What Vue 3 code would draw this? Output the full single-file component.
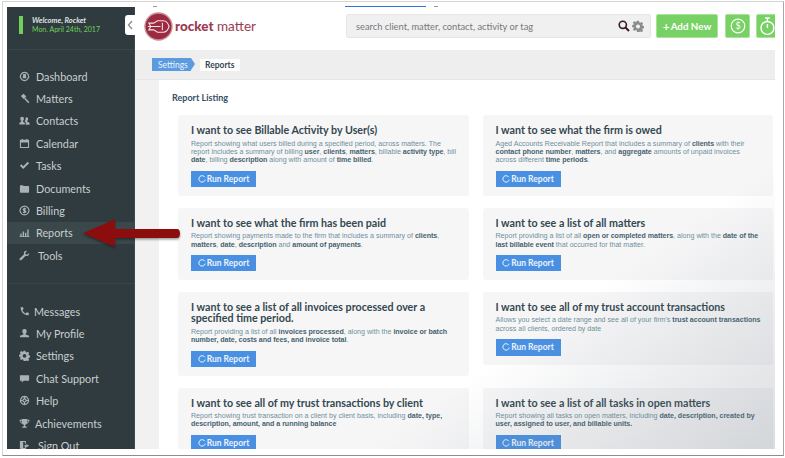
<script setup>
const navTop = [
  { label: 'Dashboard', icon: 'gauge' },
  { label: 'Matters', icon: 'gavel' },
  { label: 'Contacts', icon: 'users' },
  { label: 'Calendar', icon: 'calendar' },
  { label: 'Tasks', icon: 'check' },
  { label: 'Documents', icon: 'folder' },
  { label: 'Billing', icon: 'dollar' },
  { label: 'Reports', icon: 'chart', active: true },
  { label: 'Tools', icon: 'wrench', shift: 2 }
]
const navBottom = [
  { label: 'Messages', icon: 'phone', shift: -2 },
  { label: 'My Profile', icon: 'user' },
  { label: 'Settings', icon: 'gear' },
  { label: 'Chat Support', icon: 'chat' },
  { label: 'Help', icon: 'help' },
  { label: 'Achievements', icon: 'trophy', shift: -1 },
  { label: 'Sign Out', icon: 'signout', shift: 2 }
]

// fill = solid shapes, line = stroked shapes, 12x12 box
const icons = {
  gauge: { line: 'M6 1.500a4.500 4.500 0 1 0 .01 0z', fill: 'M4.600 3.400h2.800l.6 4.600H4z' },
  gavel: { fill: 'M2 3.400 5 .8l3 3-3 2.700zM5.600 6.200l1.200-1.100 4.600 4.900-1.300 1.200z' },
  users: { fill: 'M3.400 2a2 2 0 0 1 2 2.200c0 1-.5 1.800-1 2.200v1l2 1v2H.4v-2l2-1v-1c-.5-.4-1-1.200-1-2.200a2 2 0 0 1 2-2.200zM8.200 2.400a1.800 1.800 0 0 1 1.800 2c0 .9-.4 1.600-.9 2v.9l2.400 1.100v2.100H7.400V8l-1-.6v-1c.6-.6.7-1.200.7-2.100 0-.7.2-1.900 1.100-1.900z' },
  calendar: { fill: 'M1 2h2V1h1.400v1h3.200V1H9v1h2v9H1zm1.200 3v4.800h7.600V5z' },
  check: { fill: 'M1 6.200 2.600 4.700l2 2L9.500 2 11 3.500 4.600 9.800z' },
  folder: { fill: 'M1 3.200c0-.5.3-.8.8-.8h2.400l.8 1h5.200c.5 0 .8.3.8.8v5.600c0 .5-.3.8-.8.8H1.800c-.5 0-.8-.3-.8-.8z' },
  dollar: { line: 'M6 1.200a4.800 4.800 0 1 0 .01 0zM7.600 4.600C7.200 3.800 4.600 3.600 4.600 5c0 1.400 3 .8 3 2.200 0 1.300-2.600 1.100-3.100.3M6 3v6' },
  chart: { fill: 'M.6 10h10.800v.9H.6zM1.400 7h1.500v3H1.400zM4 5h1.500v5H4zM6.500 6.400H8V10H6.500zM9 2.600h1.500V10H9z' },
  wrench: { fill: 'M11 3.200 9 5.100 7.300 4.700 6.900 3 8.800 1.100C7.200.5 5.400 1.600 5.300 3.300c0 .5.1.9.2 1.300L1 9c-.6.6-.6 1.400-.1 1.900s1.300.5 1.900-.1l4.500-4.400c1.900.7 4.500-.6 3.700-3.200z' },
  phone: { fill: 'M2.400 1.300 4.300 1 5 3.500 3.800 4.300c.4 1.600 1.900 3.200 3.700 3.800l.8-1.200 2.600.8-.4 2c-.1.4-.5.6-.9.5C5 9.700 1.900 6.500 1.800 2c0-.3.2-.6.6-.7z' },
  user: { fill: 'M6 1a2.300 2.300 0 0 1 2.400 2.500c0 1.100-.5 2-1.100 2.500v1l3.700 1.400V10H1V8.400l3.700-1.400V6c-.6-.5-1.100-1.400-1.100-2.500A2.300 2.300 0 0 1 6 1z' },
  gear: { fill: 'M5 .8h2l.3 1.500 1.100.5 1.300-.8 1.400 1.400-.8 1.300.5 1.100 1.500.3v2l-1.500.3-.5 1.100.8 1.300-1.400 1.400-1.300-.8-1.100.5L7 12H5l-.3-1.400-1.100-.5-1.300.8-1.400-1.400.8-1.300-.5-1.100L0 7.300v-2l1.200-.3.5-1.100-.8-1.300 1.400-1.400 1.300.8 1.100-.5zM6 4.400a2 2 0 1 0 .01 0z' },
  chat: { fill: 'M1 2.400h10v6H5.200L3 10.400V8.400H1z' },
  help: { line: 'M6 1.600a4.400 4.400 0 1 0 .01 0zM6 4.200a1.800 1.800 0 1 0 .01 0zM6 1.600v2.600M6 7.800v2.600M1.600 6h2.600M7.800 6h2.600' },
  trophy: { fill: 'M3 1h6v1h2.400c0 2.400-1 3.800-3 4.200-.4.6-1 1-1.700 1.200v1.600c1 0 1.800.5 1.800 1.500H3.500c0-1 .8-1.500 1.800-1.500V7.400C4.600 7.200 4 6.800 3.600 6.200 1.600 5.800.6 4.400.6 2H3zM1.600 3c.1 1 .6 1.800 1.500 2.200L3 3zm8.800 0H9l-.1 2.200c.9-.4 1.400-1.200 1.500-2.200z' },
  signout: { fill: 'M1 1h6.500v3H6.400V2.200H3.800l.8.5v6h1.800V7h1.100v3H4.600v1.200L1 9.200zM8 4.300l3 2-3 2V7H6V5.500h2z' }
}

const leftReports = [
  { title: 'I want to see Billable Activity by User(s)', desc: 'Report showing what users billed during a specified period, across matters. The report includes a summary of billing <b>user</b>, <b>clients</b>, <b>matters</b>, billable <b>activity type</b>, bill <b>date</b>, billing <b>description</b> along with amount of <b>time billed</b>.' },
  { title: 'I want to see what the firm has been paid', desc: 'Report showing payments made to the firm that includes a summary of <b>clients</b>, <b>matters</b>, <b>date</b>, <b>description</b> and <b>amount of payments</b>.' },
  { title: 'I want to see a list of all invoices processed over a specified time period.', desc: 'Report providing a list of all <b>invoices processed</b>, along with the <b>invoice or batch number, date, costs and fees, and invoice total</b>.' },
  { title: 'I want to see all of my trust transactions by client', desc: 'Report showing trust transaction on a client by client basis, including <b>date, type, description, amount, and a running balance</b>' }
]
const rightReports = [
  { title: 'I want to see what the firm is owed', desc: 'Aged Accounts Receivable Report that includes a summary of <b>clients</b> with their <b>contact phone number</b>, <b>matters</b>, and <b>aggregate</b> amounts of unpaid invoices<br>across different <b>time periods</b>.' },
  { title: 'I want to see a list of all matters', desc: 'Report providing a list of all <b>open or completed matters</b>, along with the <b>date of the last billable event</b> that occurred for that matter.' },
  { title: 'I want to see all of my trust account transactions', desc: 'Allows you select a date range and see all of your firm\'s <b>trust account transactions</b> across all clients, ordered by date' },
  { title: 'I want to see a list of all tasks in open matters', desc: 'Report showing all tasks on open matters, including <b>date, description, created by user, assigned to user, and billable units.</b>' }
]
const reports = leftReports.flatMap((r, i) => [r, rightReports[i]])
</script>

<template>
  <div class="frame">
    <span class="top-line"></span>
    <span class="top-mark mark-a"></span>
    <span class="top-mark mark-b"></span>
    <div class="window">
      <aside class="sidebar">
        <div class="welcome">
          <span class="welcome-bar"></span>
          <div>
            <div class="welcome-name">Welcome, Rocket</div>
            <div class="welcome-date">Mon. April 24th, 2017</div>
          </div>
        </div>
        <button class="collapse" aria-label="Collapse">
          <svg width="6" height="10" viewBox="0 0 6 10"><path d="M5 1 1.500 5 5 9" fill="none" stroke="#8b9396" stroke-width="1.400" /></svg>
        </button>

        <nav class="nav nav-top">
          <a v-for="item in navTop" :key="item.label" class="nav-item" :class="{ active: item.active }">
            <svg class="nav-icon" width="12" height="12" viewBox="0 0 12 12">
              <path v-if="icons[item.icon].fill" :d="icons[item.icon].fill" fill="currentColor" fill-rule="evenodd" />
              <path v-if="icons[item.icon].line" :d="icons[item.icon].line" fill="none" stroke="currentColor" stroke-width="1.300" />
            </svg>
            <span :style="{ marginLeft: (item.shift || 0) + 'px' }">{{ item.label }}</span>
          </a>
        </nav>
        <nav class="nav nav-bottom">
          <a v-for="item in navBottom" :key="item.label" class="nav-item">
            <svg class="nav-icon" width="12" height="12" viewBox="0 0 12 12">
              <path v-if="icons[item.icon].fill" :d="icons[item.icon].fill" fill="currentColor" fill-rule="evenodd" />
              <path v-if="icons[item.icon].line" :d="icons[item.icon].line" fill="none" stroke="currentColor" stroke-width="1.300" />
            </svg>
            <span :style="{ marginLeft: (item.shift || 0) + 'px' }">{{ item.label }}</span>
          </a>
        </nav>
      </aside>

      <main class="main">
        <header class="topbar">
          <div class="logo">
            <svg width="29" height="29" viewBox="0 0 30 30">
              <circle cx="15" cy="15" r="14" fill="#9c2a40" stroke="#c98f9b" stroke-width="1.400" />
              <path d="M5 11.500h5l4-2.500h6c2.500 0 5 3 6 6-1 3-3.500 6-6 6h-6l-4-2.500H5l2-3.500z" fill="none" stroke="#f3e3e6" stroke-width="1.100" />
              <path d="M4 15h13M19 11v8" fill="none" stroke="#f3e3e6" stroke-width="1.100" />
            </svg>
            <span class="logo-text"><b>rocket</b> matter</span>
          </div>
          <div class="search">
            <span class="search-text">search client, matter, contact, activity or tag</span>
            <svg class="search-icon" width="12" height="12" viewBox="0 0 12 12">
              <circle cx="4.800" cy="4.800" r="3.600" fill="none" stroke="#3a1a28" stroke-width="1.600" />
              <path d="M7.500 7.500 11 11" stroke="#3a1a28" stroke-width="2" />
            </svg>
            <svg class="search-gear" width="12" height="12" viewBox="0 0 12 12">
              <path :d="icons.gear.fill" fill="#8d8d8d" fill-rule="evenodd" />
            </svg>
          </div>
          <button class="btn-green add-new"><span class="plus">+</span>Add New</button>
          <button class="btn-green btn-icon" aria-label="Billing">
            <svg width="16" height="16" viewBox="0 0 16 16">
              <circle cx="8" cy="8" r="6.800" fill="none" stroke="#fff" stroke-width="1.200" />
              <text x="8" y="11" text-anchor="middle" font-size="9" font-family="Lato" fill="#fff">$</text>
            </svg>
          </button>
          <button class="btn-green btn-timer" aria-label="Timer">
            <svg width="19" height="20" viewBox="0 0 19 20">
              <circle cx="11" cy="12" r="6.800" fill="none" stroke="#fff" stroke-width="1.500" />
              <path d="M8.500 1.500h5M11 2v3M11 8v4" stroke="#fff" stroke-width="1.500" fill="none" />
            </svg>
          </button>
        </header>

        <div class="crumbs">
          <span class="crumb-blue">Settings</span>
          <span class="crumb-white">Reports</span>
        </div>

        <section class="panel">
          <h2 class="panel-title">Report Listing</h2>
          <div class="grid">
            <article v-for="r in reports" :key="r.title" class="card">
              <h3 class="card-title">{{ r.title }}</h3>
              <p class="card-desc" v-html="r.desc"></p>
              <button class="run">
                <svg width="8" height="8" viewBox="0 0 8 8"><path d="M6.800 2.200A3.200 3.200 0 1 0 7.200 4.600" fill="none" stroke="#fff" stroke-width=".9" /></svg>Run Report
              </button>
            </article>
          </div>
        </section>
      </main>
    </div>

    <svg class="arrow" width="110" height="36" viewBox="0 0 110 36">
      <defs>
        <filter id="arrow-shadow" x="-10%" y="-20%" width="120%" height="150%">
          <feDropShadow dx="0" dy="1.500" stdDeviation="1.200" flood-color="#000" flood-opacity=".4" />
        </filter>
      </defs>
      <path d="M2 16.300 34 2.300V12h62c2 0 3 2 3 4.500S98 21 96 21H34v8.700z" fill="#8b0a10" filter="url(#arrow-shadow)" />
    </svg>
  </div>
</template>

<style>
html, body {
  margin: 0;
  background: #fff;
}
</style>

<style scoped>
.frame {
  position: relative;
  box-sizing: border-box;
  width: 785px;
  height: 458px;
  padding: 7px 10px 9px 7px;
  background: #fff;
  overflow: hidden;
  font-family: Lato, "Liberation Sans", sans-serif;
}

/* window edge of the screenshot */
.frame::before {
  content: '';
  position: absolute;
  left: 2px;
  top: 1px;
  width: 780px;
  height: 453px;
  border: 1px solid #d4d4d4;
  border-bottom: 1px solid #8e8e8e;
  border-right: 1px solid #a8a8a8;
}

.top-line {
  position: absolute;
  left: 345px;
  top: 6px;
  width: 81px;
  height: 1px;
  background: #2f74d8;
}

.top-mark {
  position: absolute;
  top: 6px;
  width: 4px;
  height: 1px;
  background: #9a9a9a;
}

.mark-a {
  left: 153px;
}

.mark-b {
  left: 434px;
}

.window {
  position: relative;
  display: flex;
  height: 442px;
  overflow: hidden;
}

.sidebar {
  position: relative;
  flex: 0 0 128px;
  background: #2f3b3f;
  color: #c8ced0;
  border-right: 1px solid #3f4a4e;
  box-sizing: border-box;
}

.welcome {
  display: flex;
  align-items: center;
  gap: 9px;
  height: 43px;
  padding: 0 0 6px 12px;
  border-bottom: 1px solid #3a4649;
  box-sizing: border-box;
}

.welcome-bar {
  width: 4px;
  height: 18px;
  background: #6fd05a;
}

.welcome-name {
  font-size: 7.500px;
  font-style: italic;
  font-weight: 700;
  line-height: 9px;
  color: #dfe3e4;
}

.welcome-date {
  font-size: 7px;
  line-height: 9px;
  color: #6fd05a;
}

.collapse {
  position: absolute;
  right: -1px;
  top: 8px;
  width: 10px;
  height: 20px;
  padding: 0;
  border: 0;
  border-radius: 3px 0 0 3px;
  background: #fff;
  display: flex;
  align-items: center;
  justify-content: center;
}

.nav {
  display: flex;
  flex-direction: column;
}

.nav-top {
  padding-top: 15px;
  height: 234px;
  box-sizing: border-box;
  border-bottom: 1px solid #39454a;
}

.nav-bottom {
  padding-top: 16px;
}

.nav-item {
  display: flex;
  align-items: center;
  gap: 6px;
  height: 22.400px;
  padding-left: 12px;
  font-size: 10.800px;
  color: #c8ced0;
  flex: none;
}

.nav-item.active {
  background: #3a474b;
}

.nav-icon {
  flex: none;
  width: 11px;
  height: 11px;
  color: #a9b1b4;
}

.main {
  position: relative;
  flex: 1;
  display: flex;
  flex-direction: column;
  min-width: 0;
  background: #f1f1f1;
}

/* grey sheen in the lower right of the capture */
.main::after {
  content: '';
  position: absolute;
  inset: 0;
  background: linear-gradient(145deg, rgba(120, 130, 140, 0) 68%, rgba(120, 130, 140, .28) 100%);
  pointer-events: none;
}

.topbar {
  display: flex;
  align-items: center;
  height: 43px;
  flex: none;
  padding: 0 0 5px 9px;
  box-sizing: border-box;
  background: #fff;
}

.logo {
  display: flex;
  align-items: center;
  gap: 2px;
  width: 202px;
  flex: none;
}

.logo-text {
  font-size: 13.500px;
  color: #9c3a50;
}

.logo-text b {
  font-weight: 900;
}

.search {
  display: flex;
  align-items: center;
  width: 305px;
  height: 24px;
  flex: none;
  padding: 0 6px 0 9px;
  box-sizing: border-box;
  background: #f0f0f0;
  border: 1px solid #e6e6e6;
  border-radius: 2px;
}

.search-text {
  flex: 1;
  font-size: 9.300px;
  font-weight: 400;
  color: #777;
}

.search-gear {
  margin-left: 2px;
}

.btn-green {
  display: flex;
  align-items: center;
  justify-content: center;
  height: 24px;
  padding: 0;
  border: 1px solid #a8e39a;
  border-radius: 2px;
  background: #78d164;
  color: #fff;
  font-family: inherit;
  flex: none;
  box-sizing: border-box;
}

.add-new {
  width: 62px;
  margin-left: 5px;
  font-size: 9.800px;
  font-weight: 700;
}

.plus {
  font-size: 12px;
  margin-right: 1px;
}

.btn-icon {
  width: 25px;
  margin-left: 7px;
}

.btn-timer {
  width: 20px;
  margin-left: 6px;
  border-radius: 2px 0 0 2px;
  overflow: hidden;
  justify-content: flex-start;
}

.crumbs {
  display: flex;
  align-items: center;
  flex: none;
  height: 30px;
  padding-left: 17px;
  background: #eeeeee;
  border-bottom: 1px solid #e6e6e6;
  box-sizing: border-box;
}

.crumb-blue {
  position: relative;
  display: flex;
  align-items: center;
  height: 13px;
  width: 33px;
  padding-left: 6px;
  background: #5b9be0;
  color: #eaf3fc;
  font-size: 8.500px;
}

.crumb-blue::after {
  content: '';
  position: absolute;
  left: 100%;
  top: 0;
  border-left: 4px solid #5b9be0;
  border-top: 6.500px solid transparent;
  border-bottom: 6.500px solid transparent;
}

.crumb-white {
  display: flex;
  align-items: center;
  height: 12px;
  margin-left: 9px;
  padding: 0 5px;
  background: #fff;
  color: #33474f;
  font-size: 8.500px;
  font-weight: 700;
}

.panel {
  flex: 1;
  min-height: 0;
  overflow: hidden;
  padding: 12px 0 0 13px;
  margin-left: 24px;
  background: #fff;
}

.panel-title {
  margin: 0 0 11px;
  font-size: 9px;
  line-height: 12px;
  font-weight: 700;
  color: #34505f;
}

.grid {
  display: grid;
  grid-template-columns: 291px 290px;
  column-gap: 13.500px;
  row-gap: 11.400px;
  align-items: start;
  padding-left: 6px;
}

.card {
  padding: 8px 8px 9px 13px;
  background: #f6f6f7;
  border-radius: 3px;
  box-sizing: border-box;
}

.card-title {
  margin: 0;
  font-size: 10.700px;
  line-height: 11.500px;
  padding-top: 1px;
  font-weight: 700;
  color: #34474f;
}

.card-desc {
  margin: 4px 0 6px;
  font-family: "Liberation Sans", Arial, sans-serif;
  font-size: 7.100px;
  line-height: 8.400px;
  color: #6f8f9c;
}

.card-desc :deep(b) {
  color: #46626f;
  letter-spacing: -.04px;
}

.run {
  display: flex;
  align-items: center;
  justify-content: center;
  gap: 1px;
  width: 65px;
  height: 16.500px;
  padding: 0;
  border: 0;
  background: #4a90e2;
  color: #eaf3fc;
  font-family: inherit;
  font-size: 8.500px;
  font-weight: 700;
}

.arrow {
  position: absolute;
  left: 81px;
  top: 217px;
}
</style>
